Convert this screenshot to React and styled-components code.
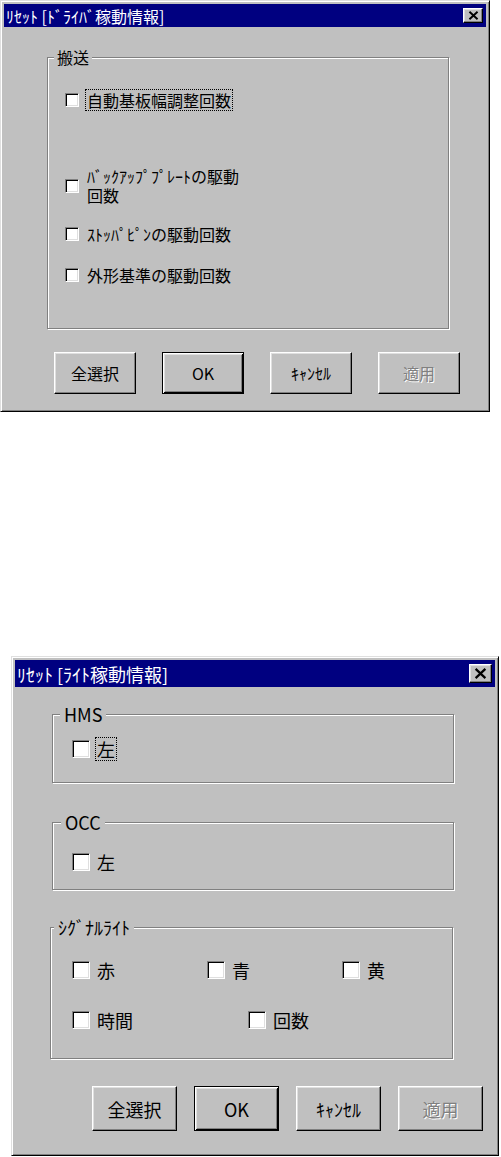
import React from 'react';
import styled, { createGlobalStyle } from 'styled-components';

const GlobalStyle = createGlobalStyle`
  html, body {
    margin: 0;
    padding: 0;
    background: #fff;
  }
  body {
    font-family: "Noto Sans CJK JP", "Noto Sans", sans-serif;
    color: #000;
  }
`;

const Page = styled.div`
  width: 501px;
  height: 1157px;
  display: flex;
  flex-direction: column;
  align-items: flex-start;
  overflow: hidden;
`;

const Window = styled.div`
  box-sizing: border-box;
  width: ${p => p.$w}px;
  height: ${p => p.$h}px;
  margin: ${p => p.$m};
  background: #c0c0c0;
  border: 1px solid;
  border-color: #dfdfdf #000 #000 #dfdfdf;
  box-shadow: inset 1px 1px 0 #fff, inset -1px -1px 0 #808080;
  padding: 3px;
  display: flex;
  flex-direction: column;
  font-size: ${p => p.$fs}px;
  flex-shrink: 0;
`;

const TitleBar = styled.div`
  height: ${p => p.$h}px;
  flex-shrink: 0;
  background: #000080;
  color: #fff;
  display: flex;
  align-items: center;
  justify-content: space-between;
  padding: 0 3px 0 2px;
  white-space: nowrap;
`;

const CloseBtn = styled.div`
  box-sizing: border-box;
  width: ${p => p.$w}px;
  height: ${p => p.$h}px;
  background: #c0c0c0;
  border: 1px solid;
  border-color: #fff #000 #000 #fff;
  box-shadow: inset -1px -1px 0 #808080, inset 1px 1px 0 #dfdfdf;
  display: flex;
  align-items: center;
  justify-content: center;
`;

const Body = styled.div`
  display: flex;
  flex-direction: column;
  align-items: flex-start;
`;

const Group = styled.div`
  position: relative;
  box-sizing: border-box;
  width: ${p => p.$w}px;
  height: ${p => p.$h}px;
  margin: ${p => p.$m};
  border: 1px solid #808080;
  box-shadow: inset 1px 1px 0 #fff, 1px 1px 0 #fff;
  padding: ${p => p.$pad};
  display: flex;
  flex-direction: column;
`;

const Legend = styled.span`
  position: absolute;
  top: 0;
  left: ${p => p.$x}px;
  transform: translateY(calc(-50% - 1px));
  padding: 0 ${p => p.$px}px;
  background: #c0c0c0;
  line-height: ${p => p.$lh}px;
  white-space: nowrap;
`;

const Row = styled.div`
  display: flex;
  align-items: center;
  margin-top: ${p => p.$mt || 0}px;
`;

const Item = styled.div`
  display: flex;
  align-items: center;
  width: ${p => (p.$w ? `${p.$w}px` : 'auto')};
  flex-shrink: 0;
`;

const Box = styled.span`
  box-sizing: border-box;
  width: ${p => p.$s}px;
  height: ${p => p.$s}px;
  flex-shrink: 0;
  background: #fff;
  border: 1px solid;
  border-color: #808080 #fff #fff #808080;
  box-shadow: inset 1px 1px 0 #000, inset -1px -1px 0 #dfdfdf;
`;

const Label = styled.span`
  margin-left: ${p => p.$gap}px;
  padding: 0 1px;
  line-height: ${p => p.$lh}px;
  white-space: nowrap;
  outline: ${p => (p.$focus ? '1px dotted #000' : 'none')};
  outline-offset: 0;
`;

const ButtonRow = styled.div`
  display: flex;
  gap: ${p => p.$gap}px;
  margin: ${p => p.$m};
`;

const Button = styled.button`
  box-sizing: border-box;
  width: ${p => p.$w}px;
  height: ${p => p.$h}px;
  padding: 0;
  font-family: inherit;
  font-size: inherit;
  background: #c0c0c0;
  color: #000;
  border: 1px solid;
  border-color: #fff #000 #000 #fff;
  box-shadow: inset -1px -1px 0 #808080, inset 1px 1px 0 #dfdfdf;

  ${p => p.$default && `
    border-color: #000;
    box-shadow: inset 1px 1px 0 #fff, inset -1px -1px 0 #000,
      inset 2px 2px 0 #dfdfdf, inset -2px -2px 0 #808080;
  `}

  &:disabled {
    color: #808080;
    text-shadow: 1px 1px 0 #fff;
  }
`;

// the X glyph on the title bar close button
const CloseIcon = ({ w, h }) => (
  <svg width={w} height={h} viewBox="0 0 12 10">
    <path d="M1.5 0.8 L10.5 9.2 M10.5 0.8 L1.5 9.2" stroke="#000" strokeWidth="2.1" fill="none" />
  </svg>
);

const Check = ({ s, gap, lh, w, focus, children }) => (
  <Item $w={w}>
    <Box $s={s} />
    <Label $gap={gap} $lh={lh} $focus={focus}>{children}</Label>
  </Item>
);

const Buttons = ({ m, gap, w, h }) => (
  <ButtonRow $m={m} $gap={gap}>
    <Button $w={w} $h={h}>全選択</Button>
    <Button $w={w} $h={h} $default>OK</Button>
    <Button $w={w} $h={h}>ｷｬﾝｾﾙ</Button>
    <Button $w={w} $h={h} disabled>適用</Button>
  </ButtonRow>
);

const DriverDialog = () => (
  <Window $w={490} $h={412} $m="0" $fs={16}>
    <TitleBar $h={23}>
      <span>ﾘｾｯﾄ [ﾄﾞﾗｲﾊﾞ稼動情報]</span>
      <CloseBtn $w={20} $h={15}><CloseIcon w={11} h={9} /></CloseBtn>
    </TitleBar>
    <Body>
      <Group $w={402} $h={272} $m="30px 0 0 43px" $pad="32px 0 0 17px">
        <Legend $x={6} $px={3} $lh={20}>搬送</Legend>
        <Row>
          <Check s={14} gap={7} lh={20} focus>自動基板幅調整回数</Check>
        </Row>
        <Row $mt={57}>
          <Check s={14} gap={7} lh={19}>
            ﾊﾞｯｸｱｯﾌﾟﾌﾟﾚｰﾄの駆動<br />回数
          </Check>
        </Row>
        <Row $mt={19}>
          <Check s={14} gap={7} lh={20}>ｽﾄｯﾊﾟﾋﾟﾝの駆動回数</Check>
        </Row>
        <Row $mt={21}>
          <Check s={14} gap={7} lh={20}>外形基準の駆動回数</Check>
        </Row>
      </Group>
      <Buttons m="23px 0 0 50px" gap={26} w={82} h={42} />
    </Body>
  </Window>
);

const LightDialog = () => (
  <Window $w={488} $h={500} $m="244px 0 0 11px" $fs={18}>
    <TitleBar $h={27}>
      <span>ﾘｾｯﾄ [ﾗｲﾄ稼動情報]</span>
      <CloseBtn $w={23} $h={19}><CloseIcon w={13} h={11} /></CloseBtn>
    </TitleBar>
    <Body>
      <Group $w={402} $h={69} $m="27px 0 0 37px" $pad="23px 0 0 19px">
        <Legend $x={7} $px={4} $lh={22}>HMS</Legend>
        <Row>
          <Check s={18} gap={6} lh={22} focus>左</Check>
        </Row>
      </Group>
      <Group $w={402} $h={68} $m="39px 0 0 37px" $pad="28px 0 0 19px">
        <Legend $x={8} $px={4} $lh={22}>OCC</Legend>
        <Row>
          <Check s={18} gap={6} lh={22}>左</Check>
        </Row>
      </Group>
      <Group $w={403} $h={132} $m="37px 0 0 35px" $pad="31px 0 0 21px">
        <Legend $x={3} $px={4} $lh={22}>ｼｸﾞﾅﾙﾗｲﾄ</Legend>
        <Row>
          <Check s={18} gap={6} lh={22} w={135}>赤</Check>
          <Check s={18} gap={6} lh={22} w={135}>青</Check>
          <Check s={18} gap={6} lh={22} w={135}>黄</Check>
        </Row>
        <Row $mt={28}>
          <Check s={18} gap={6} lh={22} w={176}>時間</Check>
          <Check s={18} gap={6} lh={22}>回数</Check>
        </Row>
      </Group>
      <Buttons m="27px 0 0 77px" gap={17} w={85} h={45} />
    </Body>
  </Window>
);

export default function App() {
  return (
    <Page>
      <GlobalStyle />
      <DriverDialog />
      <LightDialog />
    </Page>
  );
}
